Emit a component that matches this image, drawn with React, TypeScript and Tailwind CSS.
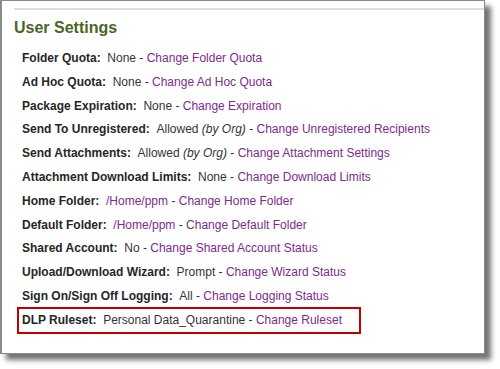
import React from "react";

interface SettingRow {
  label: string;
  value: string;
  note?: string;
  valueIsLink?: boolean;
  link: string;
  highlight?: boolean;
}

const rows: SettingRow[] = [
  { label: "Folder Quota:", value: "None", link: "Change Folder Quota" },
  { label: "Ad Hoc Quota:", value: "None", link: "Change Ad Hoc Quota" },
  { label: "Package Expiration:", value: "None", link: "Change Expiration" },
  {
    label: "Send To Unregistered:",
    value: "Allowed",
    note: "(by Org)",
    link: "Change Unregistered Recipients",
  },
  {
    label: "Send Attachments:",
    value: "Allowed",
    note: "(by Org)",
    link: "Change Attachment Settings",
  },
  {
    label: "Attachment Download Limits:",
    value: "None",
    link: "Change Download Limits",
  },
  {
    label: "Home Folder:",
    value: "/Home/ppm",
    valueIsLink: true,
    link: "Change Home Folder",
  },
  {
    label: "Default Folder:",
    value: "/Home/ppm",
    valueIsLink: true,
    link: "Change Default Folder",
  },
  { label: "Shared Account:", value: "No", link: "Change Shared Account Status" },
  { label: "Upload/Download Wizard:", value: "Prompt", link: "Change Wizard Status" },
  { label: "Sign On/Sign Off Logging:", value: "All", link: "Change Logging Status" },
  {
    label: "DLP Ruleset:",
    value: "Personal Data_Quarantine",
    link: "Change Ruleset",
    highlight: true,
  },
];

function Row({ row }: { row: SettingRow }) {
  const content = (
    <>
      <span className="font-bold text-[#262626]">{row.label}</span>
      {"\u00a0\u00a0"}
      <span className={row.valueIsLink ? "text-[#7d2a8d]" : "text-[#333333]"}>
        {row.value}
      </span>
      {row.note && (
        <>
          {" "}
          <span className="italic text-[#333333]">{row.note}</span>
        </>
      )}
      <span className="text-[#333333]"> - </span>
      <a className="text-[#7d2a8d] cursor-pointer">{row.link}</a>
    </>
  );

  if (row.highlight) {
    return (
      <div className="-ml-[5px] -mt-[2px] w-fit border-2 border-[#c00000] pl-[3px] pr-[17px] leading-[23px] whitespace-nowrap">
        {content}
      </div>
    );
  }

  return <div className="leading-[23.8px] whitespace-nowrap">{content}</div>;
}

export default function App() {
  return (
    <div className="w-[500px] h-[369px] bg-white font-['Liberation_Sans',Arial,sans-serif]">
      <div className="w-[485px] h-[354px] border border-l-2 border-[#8a8a8a] bg-white pl-[12px] pt-[7px] shadow-[6px_6px_5px_rgba(0,0,0,0.55)]">
        <div className="border-t-2 border-[#dcdcdc]" />
        <h2 className="mt-[8px] text-[16px] leading-[20px] font-bold text-[#4b6526]">
          User Settings
        </h2>
        <div className="mt-[9px] pl-[8px] text-[12px]">
          {rows.map((row) => (
            <Row key={row.label} row={row} />
          ))}
        </div>
      </div>
    </div>
  );
}
